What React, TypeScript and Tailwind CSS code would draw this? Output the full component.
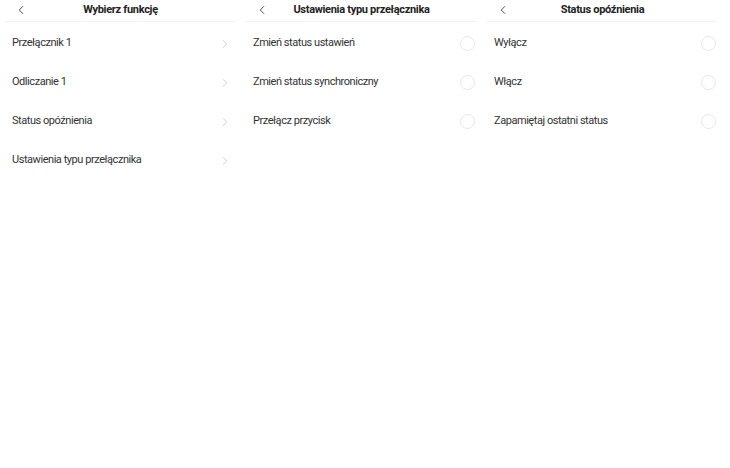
import { ChevronLeft, ChevronRight } from 'lucide-react'

type Row = { label: string }

const panels: { title: string; kind: 'nav' | 'radio'; rows: Row[] }[] = [
  {
    title: 'Wybierz funkcję',
    kind: 'nav',
    rows: [
      { label: 'Przełącznik 1' },
      { label: 'Odliczanie 1' },
      { label: 'Status opóźnienia' },
      { label: 'Ustawienia typu przełącznika' },
    ],
  },
  {
    title: 'Ustawienia typu przełącznika',
    kind: 'radio',
    rows: [
      { label: 'Zmień status ustawień' },
      { label: 'Zmień status synchroniczny' },
      { label: 'Przełącz przycisk' },
    ],
  },
  {
    title: 'Status opóźnienia',
    kind: 'radio',
    rows: [{ label: 'Wyłącz' }, { label: 'Włącz' }, { label: 'Zapamiętaj ostatni status' }],
  },
]

function Panel({ title, kind, rows }: (typeof panels)[number]) {
  return (
    <div className="w-[241px]">
      <div className="relative h-[22px] mx-[5px] border-b border-[#f3f3f3] flex items-center justify-center">
        <ChevronLeft className="absolute left-[9px] top-[3px] text-[#444]" size={14} strokeWidth={1.6} />
        <span className="text-[11px] font-bold tracking-[-0.3px] text-[#222]">{title}</span>
      </div>
      <div className="pt-[2px]">
        {rows.map((r) => (
          <div key={r.label} className="h-[39px] flex items-center justify-between pl-[12px] pr-[7px]">
            <span className="text-[11px] tracking-[-0.45px] text-[#333]">{r.label}</span>
            {kind === 'nav' ? (
              <ChevronRight className="text-[#c4c4c4] mr-[2px]" size={14} strokeWidth={1.3} />
            ) : (
              <span className="w-[15px] h-[15px] rounded-full border border-[#e8e8e8]" />
            )}
          </div>
        ))}
      </div>
    </div>
  )
}

export default function App() {
  return (
    <div className="w-[730px] h-[468px] bg-white flex" style={{ fontFamily: 'Roboto, "Noto Sans", sans-serif' }}>
      {panels.map((p) => (
        <Panel key={p.title} {...p} />
      ))}
    </div>
  )
}
